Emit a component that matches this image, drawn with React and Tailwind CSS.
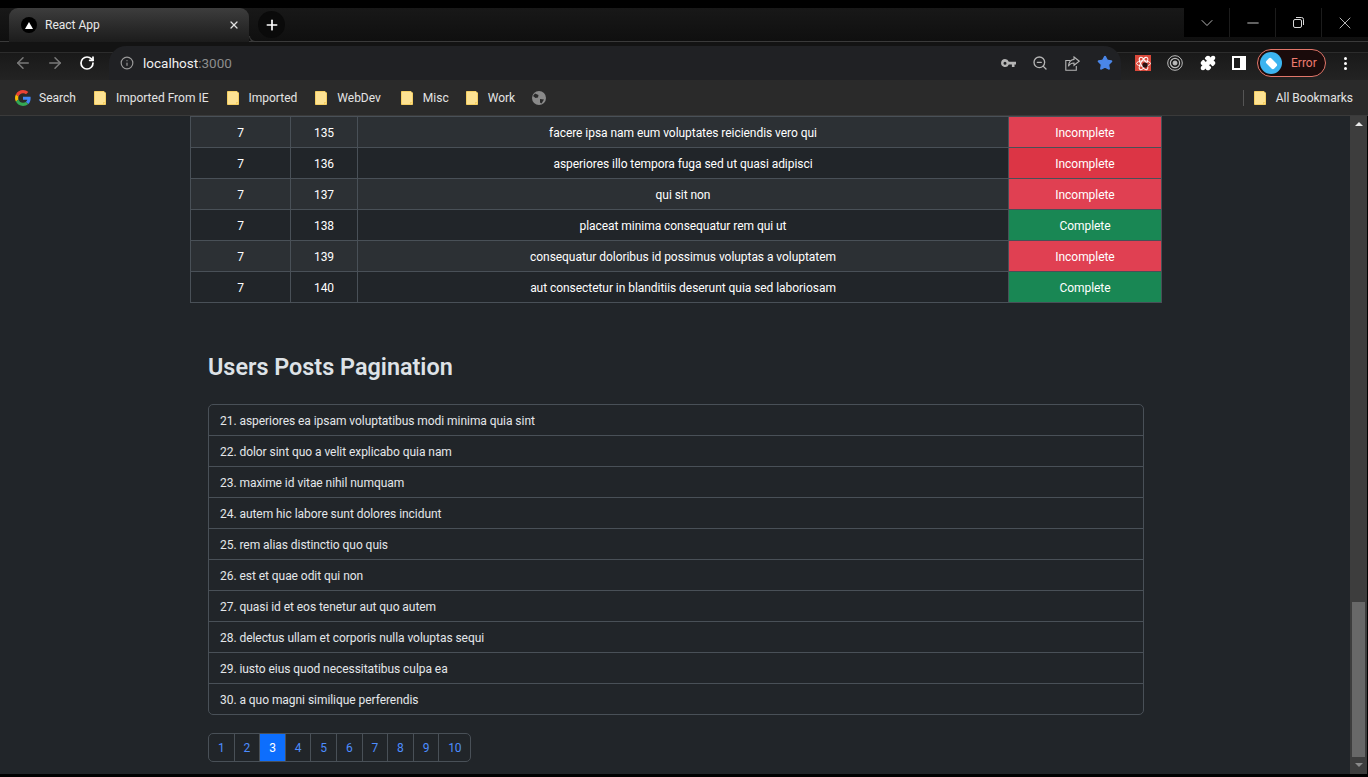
import React from 'react';
import {
  ArrowLeft, ArrowRight, RotateCw, Info, ZoomOut, Star, Puzzle, X, Plus, ChevronDown, Minus,
} from 'lucide-react';

const todos = [
  [135, 'facere ipsa nam eum voluptates reiciendis vero qui', false],
  [136, 'asperiores illo tempora fuga sed ut quasi adipisci', false],
  [137, 'qui sit non', false],
  [138, 'placeat minima consequatur rem qui ut', true],
  [139, 'consequatur doloribus id possimus voluptas a voluptatem', false],
  [140, 'aut consectetur in blanditiis deserunt quia sed laboriosam', true],
];

const posts = [
  '21. asperiores ea ipsam voluptatibus modi minima quia sint',
  '22. dolor sint quo a velit explicabo quia nam',
  '23. maxime id vitae nihil numquam',
  '24. autem hic labore sunt dolores incidunt',
  '25. rem alias distinctio quo quis',
  '26. est et quae odit qui non',
  '27. quasi id et eos tenetur aut quo autem',
  '28. delectus ullam et corporis nulla voluptas sequi',
  '29. iusto eius quod necessitatibus culpa ea',
  '30. a quo magni similique perferendis',
];

const pages = [1, 2, 3, 4, 5, 6, 7, 8, 9, 10];

const Folder = () => (
  <svg width="12" height="14" viewBox="0 0 12 14" className="shrink-0">
    <path d="M0.500 0.500H10L11.500 2V13.500H0.500Z" fill="#fde293" stroke="#f5cf63" />
    <path d="M9 13.500V11H11.500" fill="#f5cf63" />
  </svg>
);

const GoogleG = () => (
  <svg width="16" height="16" viewBox="0 0 48 48" className="shrink-0">
    <path fill="#EA4335" d="M24 9.500c3.500 0 6.700 1.300 9.100 3.500l6.800-6.800C35.800 2.400 30.300 0 24 0 14.600 0 6.500 5.400 2.600 13.200l7.900 6.200C12.400 13.600 17.700 9.500 24 9.500z" />
    <path fill="#4285F4" d="M46.900 24.500c0-1.600-.1-3.100-.4-4.500H24v9h12.900c-.6 3-2.200 5.500-4.700 7.200l7.700 6c4.500-4.200 7-10.300 7-17.700z" />
    <path fill="#FBBC05" d="M10.500 28.600c-.5-1.400-.8-3-.8-4.600s.3-3.200.8-4.600l-7.900-6.200C.9 16.500 0 20.100 0 24s.9 7.500 2.600 10.800l7.900-6.200z" />
    <path fill="#34A853" d="M24 48c6.500 0 11.900-2.100 15.900-5.800l-7.700-6c-2.200 1.400-4.900 2.300-8.200 2.300-6.300 0-11.600-4.100-13.500-9.900l-7.900 6.200C6.500 42.600 14.600 48 24 48z" />
  </svg>
);

const Bookmark = ({ label, className }) => (
  <div className={`flex items-center gap-[10px] ${className}`}>
    <Folder />
    <span className="pt-[1px]">{label}</span>
  </div>
);

const TabStrip = () => (
  <div className="flex h-[34px] border-b border-[#3a3a3a] bg-gradient-to-b from-[#181818] to-[#0f0f0f]">
    <div className="relative ml-[9px] flex h-[34px] w-[240px] items-center rounded-t-[9px] bg-gradient-to-b from-[#3d3d3d] to-[#1c1c1c] pl-[12px] pr-[9px] text-[12px] text-[#e8e8e8] after:absolute after:bottom-0 after:left-full after:h-[6px] after:w-[6px] after:rounded-bl-[6px] after:border-b after:border-l after:border-[#3a3a3a]">
      <div className="flex h-[16px] w-[16px] items-center justify-center rounded-full bg-black">
        <svg width="8" height="7" viewBox="0 0 8 7"><path d="M4 0L8 7H0Z" fill="#fff" /></svg>
      </div>
      <span className="ml-[8px]">React App</span>
      <X size={12} strokeWidth={2.5} className="ml-auto text-[#e0e0e0]" />
    </div>
    <div className="ml-[9px] mt-[3px] flex h-[27px] w-[27px] items-center justify-center rounded-full bg-[#0a0a0a]">
      <Plus size={16} strokeWidth={2.5} className="text-white" />
    </div>
    <div className="ml-auto flex h-[29px] w-[184px] bg-black text-[#d8d8d8]">
      <div className="flex w-[46px] items-center justify-center border-r border-[#1c1c1c]"><ChevronDown size={20} strokeWidth={1} /></div>
      <div className="flex w-[46px] items-center justify-center border-r border-[#1c1c1c]"><Minus size={18} strokeWidth={1.2} /></div>
      <div className="flex w-[46px] items-center justify-center border-r border-[#1c1c1c]">
        <svg width="11" height="11" viewBox="0 0 11 11" fill="none" stroke="#d8d8d8"><rect x="0.500" y="2.500" width="8" height="8" rx="1.500" /><path d="M3 .5h5.500a2 2 0 0 1 2 2V8" /></svg>
      </div>
      <div className="flex w-[46px] items-center justify-center"><X size={20} strokeWidth={1} /></div>
    </div>
  </div>
);

const Toolbar = () => (
  <div className="flex h-[38px] items-end bg-[linear-gradient(to_bottom,#131313_0,#131313_10px,#2c2c2c_10px,#2c2c2c_11px,#191919_11px,#232323_100%)] pl-[14px]">
    <div className="flex h-[38px] items-center gap-[14px] pt-[4px]">
      <ArrowLeft size={18} className="text-[#7a7a7a]" />
      <ArrowRight size={18} className="text-[#7a7a7a]" />
      <RotateCw size={16} strokeWidth={2.6} className="ml-[1px] text-white" />
    </div>
    <div className="ml-[14px] flex h-[34px] w-[1012px] items-center rounded-t-[17px] bg-[#202124] pl-[11px] pr-[8px]">
      <Info size={14} className="text-[#9a9a9a]" />
      <span className="ml-[9px] text-[13.500px] text-[#f0f0f0]">localhost<span className="text-[#8d8d8d]">:3000</span></span>
      <div className="ml-auto flex items-center gap-[17px]">
        <svg width="15" height="9" viewBox="0 0 15 9" className="text-[#b5b5b5]">
          <path fill="currentColor" fillRule="evenodd" d="M4 0a4 4 0 0 1 3.800 2.700H15v2.800h-1.500V8h-2.600V5.500H7.800A4 4 0 1 1 4 0ZM4 2.700a1.500 1.500 0 1 0 0 3 1.500 1.500 0 0 0 0-3Z" />
        </svg>
        <ZoomOut size={16} className="-ml-[1px] text-[#b5b5b5]" />
        <svg width="15" height="15" viewBox="0 0 15 15" fill="none" stroke="#b5b5b5" strokeWidth="1.100">
          <path d="M5.500 4.500H.8v9.700h10.500V10" />
          <path d="M9 1l5.300 4.200L9 9.300V7C6.500 7 4.600 8 3.400 10.300 3.700 7 5.500 3.800 9 3.400Z" />
        </svg>
        <Star size={16} fill="#4a86e8" className="text-[#4a86e8]" />
      </div>
    </div>
    <div className="flex h-[38px] items-center pt-[4px]">
      <div className="ml-[14px] flex h-[16px] w-[16px] items-center justify-center bg-[#d9483a]">
        <svg width="15" height="15" viewBox="0 0 14 14" fill="none" stroke="#ffffff" strokeWidth="0.900"><ellipse cx="7" cy="7" rx="6.500" ry="2.500" /><ellipse cx="7" cy="7" rx="6.500" ry="2.500" transform="rotate(60 7 7)" /><ellipse cx="7" cy="7" rx="6.500" ry="2.500" transform="rotate(120 7 7)" /><circle cx="8.500" cy="8.500" r="2.500" fill="#2a1010" stroke="none" /></svg>
      </div>
      <svg width="16" height="16" viewBox="0 0 16 16" fill="none" stroke="#bdbdbd" className="ml-[16px]"><circle cx="8" cy="8" r="7.300" /><circle cx="8" cy="8" r="4.600" strokeWidth="1.200" /><circle cx="8" cy="8" r="2" fill="#bdbdbd" /></svg>
      <Puzzle size={16} fill="#fff" className="ml-[17px] text-white" />
      <div className="ml-[16px] flex h-[14px] w-[14px] border-2 border-white bg-white"><div className="w-[6px] bg-[#1c1c1c]" /></div>
      <div className="ml-[11px] flex h-[28px] w-[69px] items-center rounded-full border border-[#e2766a] bg-[#1a0b0b] pl-[2px] text-[12px] text-[#ee7b6f]">
        <div className="flex h-[22px] w-[22px] items-center justify-center rounded-full bg-[#3cb4f0]">
          <div className="h-[7px] w-[11px] rotate-45 rounded-[2px] bg-white" />
        </div>
        <span className="ml-[9px]">Error</span>
      </div>
      <div className="ml-[18px] flex flex-col gap-[2px]">
        <div className="h-[3px] w-[3px] rounded-full bg-white" />
        <div className="h-[3px] w-[3px] rounded-full bg-white" />
        <div className="h-[3px] w-[3px] rounded-full bg-white" />
      </div>
    </div>
  </div>
);

const BookmarksBar = () => (
  <div className="flex h-[36px] items-center border-b border-[#3a3a3a] bg-[#2a2a2a] pl-[15px] pr-[15px] text-[12px] text-[#e4e4e4]">
    <GoogleG />
    <span className="ml-[8px] pt-[1px]">Search</span>
    <Bookmark label="Imported From IE" className="ml-[18px]" />
    <Bookmark label="Imported" className="ml-[18px]" />
    <Bookmark label="WebDev" className="ml-[18px]" />
    <Bookmark label="Misc" className="ml-[20px]" />
    <Bookmark label="Work" className="ml-[17px]" />
    <svg width="14" height="14" viewBox="0 0 14 14" className="ml-[17px]">
      <circle cx="7" cy="7" r="7" fill="#8a8a8a" />
      <path d="M3 2.500L6.500 4 6 6.500 3.500 7 1 5ZM8 8l4 .5-2.500 4-1.500-1Z" fill="#2a2a2a" />
    </svg>
    <div className="ml-auto h-[16px] w-px bg-[#555]" />
    <Bookmark label="All Bookmarks" className="ml-[10px]" />
  </div>
);

const TodoRow = ({ todo, index }) => {
  const [id, title, done] = todo;
  const striped = index % 2 === 0;
  return (
    <tr className={striped ? 'bg-[#2c3034]' : 'bg-[#212529]'}>
      <td className="h-[31px] border border-[#495057] p-0 pt-[1px]">7</td>
      <td className="h-[31px] border border-[#495057] p-0 pt-[1px]">{id}</td>
      <td className="h-[31px] border border-[#495057] p-0 pt-[1px]">{title}</td>
      <td className={`h-[31px] border border-[#495057] p-0 pt-[1px] ${done ? 'bg-[#198754]' : striped ? 'bg-[#e04052]' : 'bg-[#dc3545]'}`}>
        {done ? 'Complete' : 'Incomplete'}
      </td>
    </tr>
  );
};

const Pagination = () => (
  <div className="mt-[18px] flex h-[29px] w-fit overflow-hidden rounded-[5px] border border-[#495057] text-[#4d8dff]">
    {pages.map((page) => (
      <div
        key={page}
        className={`flex h-full items-center justify-center border-r border-[#495057] pt-[1px] last:border-r-0 ${page === 10 ? 'w-[31px]' : 'w-[25.600px]'} ${page === 3 ? 'bg-[#0d6efd] text-white' : ''}`}
      >
        {page}
      </div>
    ))}
  </div>
);

const Content = () => (
  <div className="mr-[1px] flex h-[658px] overflow-hidden bg-[#212529] text-[12px] tracking-[-0.05px] text-white">
    <div className="min-w-0 flex-1 pl-[2px]">
      <table className="mx-auto w-[972px] table-fixed border-collapse text-center">
        <colgroup>
          <col className="w-[100px]" />
          <col className="w-[67px]" />
          <col />
          <col className="w-[153px]" />
        </colgroup>
        <tbody>
          {todos.map((todo, index) => <TodoRow key={todo[0]} todo={todo} index={index} />)}
        </tbody>
      </table>
      <div className="mx-auto w-[936px]">
        <h2 className="mt-[46px] text-[23.400px] font-semibold leading-[36px] tracking-normal text-[#dee2e6]">Users Posts Pagination</h2>
        <ul className="mt-[19px] overflow-hidden rounded-[5px] border border-[#495057] text-[#e4e7ea]">
          {posts.map((post) => (
            <li key={post} className="flex h-[31px] items-center border-b border-[#495057] px-[11px] pt-[1px] last:h-[30px] last:border-b-0">{post}</li>
          ))}
        </ul>
        <Pagination />
      </div>
    </div>
    <div className="flex w-[17px] flex-col items-center bg-[#3d3d3d]">
      <svg width="10" height="16" viewBox="0 0 10 16" className="shrink-0"><path d="M1 10L5 6L9 10Z" fill="#e8e8e8" /></svg>
      <div className="mt-[470px] h-[155px] w-[13px] bg-[#686868]" />
      <svg width="10" height="16" viewBox="0 0 10 16" className="shrink-0"><path d="M1 6L5 10L9 6Z" fill="#8a8a8a" /></svg>
    </div>
  </div>
);

export default function App() {
  return (
    <div className="h-[777px] overflow-hidden bg-black pt-[8px] font-['Roboto',sans-serif]">
      <TabStrip />
      <Toolbar />
      <BookmarksBar />
      <Content />
    </div>
  );
}
